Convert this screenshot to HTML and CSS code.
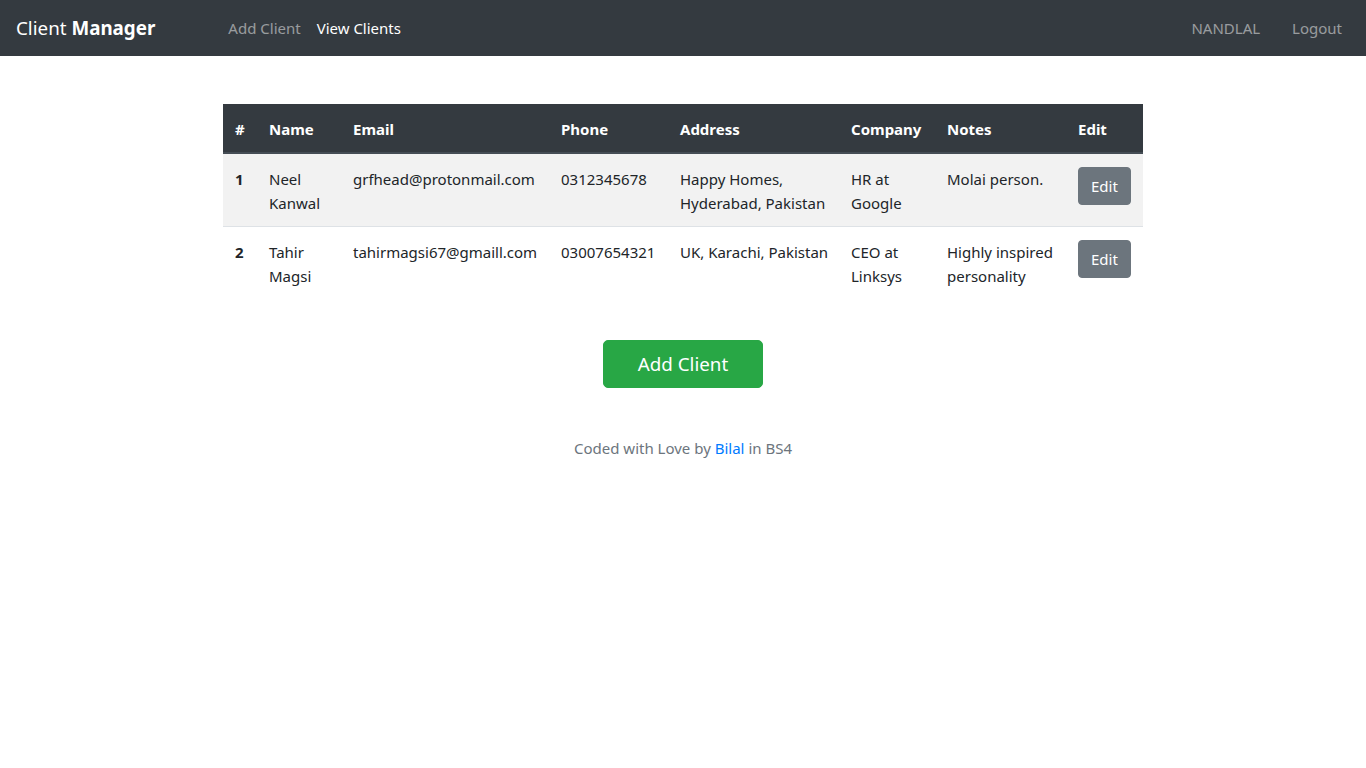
FILE: index.html
```html
<!DOCTYPE html>
<html lang="en">
<head>
<meta charset="utf-8">
<title>Client Manager</title>
<link rel="stylesheet" href="styles.css">
</head>
<body>
<nav class="navbar">
  <a class="brand" href="#">Client <b>Manager</b></a>
  <ul class="nav nav-left">
    <li><a class="nav-link" href="#">Add Client</a></li>
    <li><a class="nav-link active" href="#">View Clients</a></li>
  </ul>
  <ul class="nav nav-right">
    <li><a class="nav-link" href="#">NANDLAL</a></li>
    <li><a class="nav-link" href="#">Logout</a></li>
  </ul>
</nav>

<main class="container">
  <table class="table">
    <colgroup>
      <col class="c-num"><col class="c-name"><col class="c-email"><col class="c-phone">
      <col class="c-addr"><col class="c-comp"><col class="c-notes"><col class="c-edit">
    </colgroup>
    <thead>
      <tr>
        <th>#</th><th>Name</th><th>Email</th><th>Phone</th><th>Address</th><th>Company</th><th>Notes</th><th>Edit</th>
      </tr>
    </thead>
    <tbody>
      <tr class="striped">
        <th>1</th>
        <td>Neel Kanwal</td>
        <td>grfhead@protonmail.com</td>
        <td>0312345678</td>
        <td>Happy Homes, Hyderabad, Pakistan</td>
        <td>HR at Google</td>
        <td>Molai person.</td>
        <td><a class="btn btn-secondary" href="#">Edit</a></td>
      </tr>
      <tr>
        <th>2</th>
        <td>Tahir Magsi</td>
        <td>tahirmagsi67@gmaill.com</td>
        <td>03007654321</td>
        <td class="nowrap">UK, Karachi, Pakistan</td>
        <td>CEO at Linksys</td>
        <td>Highly inspired personality</td>
        <td><a class="btn btn-secondary" href="#">Edit</a></td>
      </tr>
    </tbody>
  </table>

  <div class="actions">
    <a class="btn btn-lg btn-success" href="#">Add Client</a>
  </div>

  <p class="footer">Coded with Love by <a href="#">Bilal</a> in BS4</p>
</main>
</body>
</html>
```

FILE: styles.css
```css
* { box-sizing: border-box; }

body {
  margin: 0;
  font-family: "Noto Sans", "Open Sans", sans-serif;
  font-size: 15px;
  line-height: 24px;
  color: #212529;
  background: #fff;
}

a { text-decoration: none; }

.navbar {
  display: flex;
  align-items: center;
  height: 56px;
  padding: 0 16px;
  background: #343a40;
}

.brand {
  font-size: 18.8px;
  color: #fff;
  line-height: 30px;
  margin-right: 65px;
}

.brand b { font-weight: 700; }

.nav {
  display: flex;
  list-style: none;
  margin: 0;
  padding: 0;
}

.nav-right { margin-left: auto; gap: 16px; }

.nav-link {
  display: block;
  padding: 8px;
  color: rgba(255,255,255,.5);
}

.nav-link.active { color: #fff; }

.container {
  width: 920px;
  margin: 48px auto 0;
}

.table {
  width: 100%;
  border-collapse: collapse;
  table-layout: fixed;
}

.c-num { width: 34px; }
.c-name { width: 84px; }
.c-email { width: 208px; }
.c-phone { width: 119px; }
.c-addr { width: 171px; }
.c-comp { width: 96px; }
.c-notes { width: 131px; }
.c-edit { width: 77px; }

.table th, .table td {
  padding: 13px 12px 11px;
  text-align: left;
  vertical-align: top;
  border-top: 1px solid #dee2e6;
}

.table thead th {
  background: #343a40;
  color: #fff;
  font-weight: 700;
  border-top: 0;
  border-bottom: 2px solid #454d55;
}

.table tbody th { font-weight: 700; }

.table tbody tr:first-child th,
.table tbody tr:first-child td { border-top: 0; }

.table .nowrap { white-space: nowrap; }

.striped { background: #f2f2f2; }

.btn {
  display: inline-block;
  color: #fff;
  border-radius: 4px;
  text-align: center;
}

.btn-secondary {
  background: #6c757d;
  padding: 6px 12px;
  line-height: 24px;
  border: 1px solid #6c757d;
}

.btn-lg {
  font-size: 18.8px;
  line-height: 30px;
  padding: 8px 16px;
  border-radius: 5px;
  width: 160px;
  border: 1px solid #28a745;
}

.btn-success { background: #28a745; }

.actions {
  display: flex;
  justify-content: center;
  margin-top: 41px;
}

.footer {
  margin: 48px 0 0;
  text-align: center;
  color: #6c757d;
}

.footer a { color: #007bff; }
```
